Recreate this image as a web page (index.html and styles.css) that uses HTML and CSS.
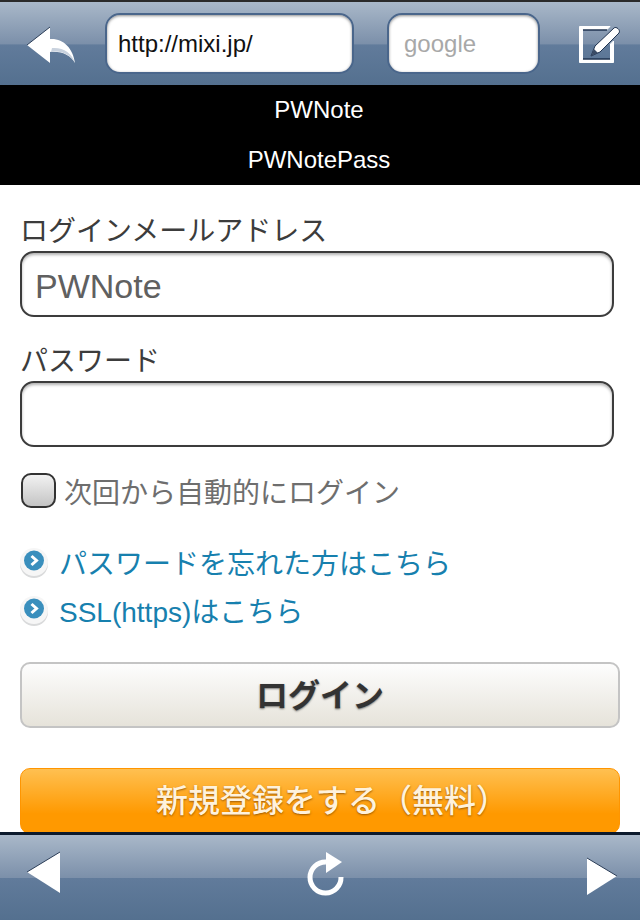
FILE: index.html
```html
<!DOCTYPE html>
<html lang="ja">
<head>
<meta charset="utf-8">
<title>mixi</title>
<link rel="stylesheet" href="styles.css">
</head>
<body>
<div class="app">
  <header class="topbar">
    <svg class="icon-back" width="52" height="38" viewBox="0 0 52 38">
      <path d="M2 19 L25 1 V13 C38 12 48 22 50 37 C46 30 38 25 25 26 V37 Z" fill="#fff"/>
      <path d="M2 19 L25 1" stroke="#2c3e58" stroke-width="1" fill="none"/>
      <path d="M26 26 C38 24 46 30 50 37 C47 27 38 21 27 22 Z" fill="#c9d2de"/>
    </svg>
    <div class="field url">http://mixi.jp/</div>
    <div class="field search">google</div>
    <svg class="icon-edit" width="44" height="42" viewBox="0 0 44 42">
      <path d="M2.500 3.500 H33 L30 6.500 H5.500 V36.500 H33.500 V21 L36.500 18 V39.500 H2.500 Z" fill="#fff" stroke="#fff" stroke-width="1" stroke-linejoin="round"/>
      <path d="M6 7 H30" stroke="#1f3350" stroke-width="1.500"/>
      <path d="M6 36 H33" stroke="#1f3350" stroke-width="1.500"/>
      <path d="M14 33 L18 23 L37 5 C39 3 44 7 42 10 L23 29 Z" fill="#fff" stroke="#1f3350" stroke-width="1"/>
      <path d="M14 33 L17 26 L21 30 Z" fill="#3a4c66"/>
    </svg>
  </header>
  <div class="band">
    <div class="band-row">PWNote</div>
    <div class="band-row">PWNotePass</div>
  </div>
  <main class="content">
    <div class="label label-first">ログインメールアドレス</div>
    <div class="input">PWNote</div>
    <div class="label label-second">パスワード</div>
    <div class="input"></div>
    <div class="check-row"><span class="checkbox"></span><span class="check-text">次回から自動的にログイン</span></div>
    <div class="link-row link-first">
      <svg class="bullet" width="30" height="30" viewBox="0 0 30 30"><use href="#bullet-shape"/></svg>
      <span>パスワードを忘れた方はこちら</span>
    </div>
    <div class="link-row link-second">
      <svg class="bullet" width="30" height="30" viewBox="0 0 30 30"><use href="#bullet-shape"/></svg>
      <span>SSL(https)はこちら</span>
    </div>
    <div class="btn btn-login">ログイン</div>
    <div class="btn btn-signup">新規登録をする（無料）</div>
  </main>
  <footer class="bottombar">
    <svg class="icon-prev" width="36" height="44" viewBox="0 0 36 44">
      <path d="M1 22 L34 2 V43 Z" fill="#fff"/>
      <path d="M1 22 L34 2" stroke="#2c3e58" stroke-width="1" fill="none"/>
    </svg>
    <svg class="icon-reload" width="40" height="46" viewBox="0 0 40 46">
      <path d="M35 26 A15.500 15.500 0 1 1 20 11" fill="none" stroke="#fff" stroke-width="5"/>
      <path d="M20 1 L36 11 L20 22 Z" fill="#fff"/>
    </svg>
    <svg class="icon-next" width="32" height="40" viewBox="0 0 32 40">
      <path d="M31 20 L1 2 V39 Z" fill="#fff"/>
      <path d="M31 20 L1 2" stroke="#2c3e58" stroke-width="1" fill="none"/>
    </svg>
  </footer>
</div>
<svg class="defs" width="0" height="0">
  <defs>
    <g id="bullet-shape">
      <circle cx="15" cy="16" r="14" fill="#d9dadb"/>
      <circle cx="15" cy="14" r="14" fill="#f6f6f6"/>
      <circle cx="15" cy="12.500" r="10" fill="#3a8fbd"/>
      <path d="M12.500 8 L17.500 12.500 L12.500 17" fill="none" stroke="#fff" stroke-width="3"/>
    </g>
  </defs>
</svg>
</body>
</html>
```
FILE: styles.css
```css
* { box-sizing: border-box; }
html, body { margin: 0; padding: 0; background: #fff; }
body { font-family: "Liberation Sans", "Noto Sans CJK JP", sans-serif; }
.defs { position: absolute; }
.app { width: 640px; height: 920px; display: flex; flex-direction: column; overflow: hidden; }

.topbar {
  height: 85px; flex: none; display: flex; align-items: center; padding-top: 1px;
  border-top: 2px solid #2a2a2a;
  background: linear-gradient(#a9b8c9 0, #7c90aa 50%, #617b9b 52%, #54708f 100%);
}
.icon-back { margin-left: 25px; margin-top: 2px; flex: none; }
.field {
  height: 61px; background: #fff; border-radius: 15px; display: flex; align-items: center;
  font-size: 24px; border: 2px solid #4a668b; margin-top: -2px; padding-top: 1px;
  box-shadow: inset 0 1px 3px rgba(0,0,0,.45);
}
.url { width: 249px; margin-left: 28px; padding-left: 11px; color: #111; }
.search { width: 153px; margin-left: 33px; padding-left: 15px; color: #a8a8a8; }
.icon-edit { margin-left: 37px; flex: none; }

.band { height: 100px; flex: none; background: #000; color: #fff; font-size: 24px; }
.band-row { height: 50px; display: flex; align-items: center; justify-content: center; padding-right: 2px; }

.content { flex: 1; min-height: 0; overflow: hidden; padding: 0 20px; font-size: 28px; }
.label { height: 33px; line-height: 33px; color: #3c3c3c; }
.label-first { margin-top: 30px; }
.label-second { margin-top: 28px; }
.input {
  width: 594px; height: 66px; margin-top: 3px; border: 2px solid #3c3c3c; border-radius: 14px;
  background: #fff; box-shadow: inset 0 2px 3px rgba(0,0,0,.3);
  color: #606060; font-size: 34px; padding: 4px 0 0 13px; display: flex; align-items: center;
}
.check-row { display: flex; align-items: center; margin-top: 25px; height: 36px; }
.checkbox {
  width: 35px; height: 35px; margin-left: 1px; border: 2px solid #333; border-radius: 10px; flex: none;
  background: linear-gradient(#f2f2f2, #c4c4c4);
}
.check-text { margin-left: 8px; padding-top: 2px; color: #6e6e6e; }
.link-row { display: flex; align-items: center; color: #1780ae; height: 34px; }
.link-first { margin-top: 37px; }
.link-second { margin-top: 14px; }
.bullet { flex: none; margin-right: 10px; margin-left: -1px; margin-top: 2px; }
.btn {
  width: 600px; display: flex; align-items: center; justify-content: center;
  font-size: 32px; font-weight: 700; border-radius: 10px;
}
.btn-login {
  height: 66px; margin-top: 35px; padding-bottom: 5px; color: #333; border: 2px solid #c4c4c4;
  background: linear-gradient(#fdfdfd, #e6e3da);
  text-shadow: 0 1px 2px rgba(0,0,0,.5);
}
.btn-signup {
  height: 66px; margin-top: 40px; padding: 0 0 7px 24px; color: #fff2dc; border: 1px solid #ff9500; font-weight: 500;
  background: linear-gradient(#ffc051, #ff9900 70%);
  text-shadow: 0 1px 2px rgba(130,70,0,.8);
}

.bottombar {
  height: 88px; flex: none; display: flex; align-items: flex-start; justify-content: space-between;
  padding: 0 22px 0 26px; border-top: 3px solid #0c1a2c;
  background: linear-gradient(#a9b8c9 0, #7c90aa 50%, #617b9b 51%, #54708f 100%);
}
.icon-prev { margin-top: 15px; }
.icon-reload { margin-top: 16px; margin-left: 4px; }
.icon-next { margin-top: 21px; }
```
